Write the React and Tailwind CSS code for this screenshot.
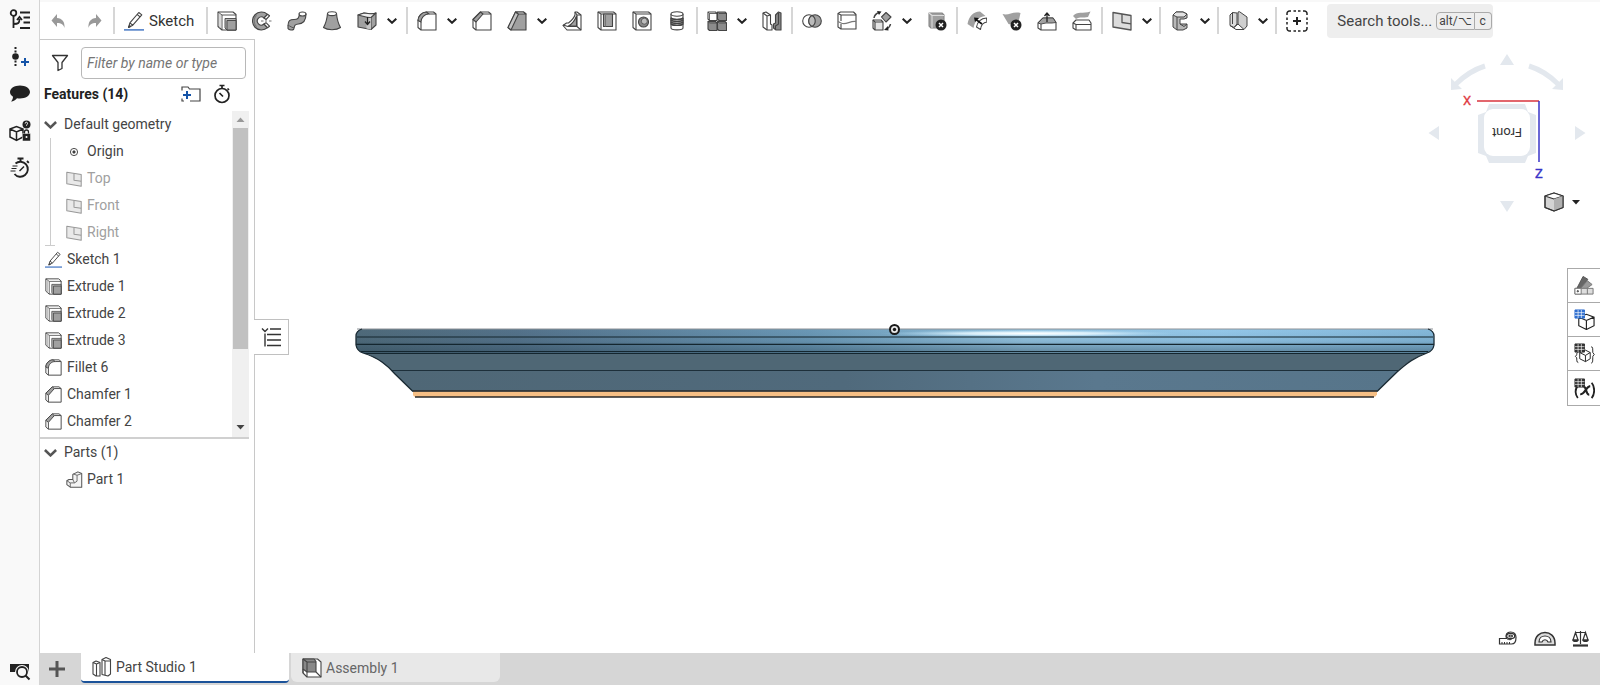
import React from "react";

const DARK = "#444";
const MID = "#a0a0a0";
const LIGHT = "#dcdcdc";

const Icon = ({ size = 20, children }) => (
  <svg
    width={size}
    height={size}
    viewBox="0 0 20 20"
    fill="none"
    stroke={DARK}
    strokeWidth="1.1"
    strokeLinejoin="round"
    className="block shrink-0"
    aria-hidden="true"
  >
    {children}
  </svg>
);

const SketchIcon = ({ size }) => (
  <Icon size={size}>
    <path d="M4.5 16.5l1.4-4.6L14.8 1.5l3 2.4-9 10.300zM5.900 11.900l2.900 2.300M13.200 3.500l2.900 2.400" fill="#fff" strokeWidth="1.100" />
    <path d="M4.500 16.500l1-2 1 .9z" fill={DARK} />
    <path d="M0 18.900h20" stroke="#3a6fc0" strokeWidth="1.400" />
  </Icon>
);

const ExtrudeIcon = ({ size }) => (
  <Icon size={size}>
    <path d="M1 1h15l3 2.500V19H5l-4-3.500z" fill="#fff" />
    <path d="M1 1l4 3h14M5 4v15" strokeWidth=".9" />
    <path d="M3 2.500v14.600" stroke="#aaa" strokeWidth=".9" />
    <path d="M8 7.500h11V19h-9l-2-2z" fill="#b4b4b4" strokeWidth=".9" />
    <path d="M10 9.500h9V19h-9z" fill={MID} strokeWidth=".9" />
  </Icon>
);

const FilletIcon = ({ size }) => (
  <Icon size={size}>
    <path d="M1 9.500C1 5 5 1 9.500 1h7l2.500 2v16H4l-3-2.500z" fill="#fff" />
    <path d="M1 9.500C1 5 5 1 9.500 1L12 3c-4.500 0-8 3.500-8 8z" fill={MID} />
    <path d="M12 3h7M4 11v8" />
  </Icon>
);

const ChamferIcon = ({ size }) => (
  <Icon size={size}>
    <path d="M1 8.500L8.500 1h8L19 3v16H4l-3-2.500z" fill="#fff" />
    <path d="M1 8.500L8.500 1 11 3l-7 8z" fill={MID} />
    <path d="M11 3h8M4 11v8" />
  </Icon>
);

const PlaneIcon = ({ size }) => (
  <Icon size={size}>
    <path d="M1 1.500l18 3V19L1 16z" fill={LIGHT} stroke="#555" strokeWidth="1.300" />
    <path d="M10 3v8.500l9 1.300" stroke="#555" strokeWidth="1.300" />
  </Icon>
);

const CubeX = ({ cx, cy }) => (
  <>
    <circle cx={cx} cy={cy} r="5.500" fill="#222" stroke="none" />
    <path d={`M${cx - 2} ${cy - 2}l4 4m0-4l-4 4`} stroke="#fff" strokeWidth="1.500" />
  </>
);

const tools = {
  extrude: <ExtrudeIcon />,
  revolve: (
    <Icon>
      <path d="M15.500 3.300A9 9 0 1 0 15.500 16.700L12 13a4 4 0 1 1 0-6z" fill={MID} />
      <path d="M15.500 3.300l2 1.500-3.500 3.700L12 7zM15.500 16.700l2-1.500-3.500-3.500L12 13z" fill="#fff" />
      <path d="M4.500 4c-3 3-3 9 0 12" stroke="#777" />
      <path d="M9 10h2.500M13 10h2M17 10h2.500" stroke="#777" />
    </Icon>
  ),
  sweep: (
    <Icon>
      <path d="M1 14.500c0-5 2-6 6-6s4.500-1 5.500-5L19 3c0 7-2.500 9.500-7.500 10-3.500.300-4 1.500-4.500 4.500z" fill={MID} />
      <ellipse cx="15.500" cy="3" rx="3.500" ry="2" fill="#fff" />
      <path d="M1 14.500v3c1 1.800 4.500 2 6 .500" fill={MID} />
    </Icon>
  ),
  loft: (
    <Icon>
      <path d="M5.500 2.500C5 9 3.500 13 1.500 16.500c4 3 13 3 17 0C16.500 13 15 9 14.500 2.500z" fill={MID} />
      <ellipse cx="10" cy="2.700" rx="4.500" ry="1.900" fill="#fff" />
    </Icon>
  ),
  thicken: (
    <Icon>
      <path d="M1 4l6-2c4 0 8 2 12 0v12l-5 4.500L1 16z" fill={MID} />
      <path d="M1 4l6-2c4 0 8 2 12 0l-5 4.500C10 7 5 4.500 1 4z" fill="#eee" />
      <path d="M14 6.500v12" />
      <path d="M9.500 7c3 .300 4 0 4.500-.500v12L9.500 17.500z" fill="#c6c6c6" stroke="none" />
      <path d="M10.500 6v7M8 10.500l2.500 3 2.500-3" stroke="#222" strokeWidth="1.300" />
    </Icon>
  ),
  fillet: <FilletIcon />,
  chamfer: <ChamferIcon />,
  draft: (
    <Icon>
      <path d="M8.500 1h8L19 3v16H4l-3-2.500z" fill={MID} />
      <path d="M8.500 1L1 16.500 4 19l7.500-16z" fill="#c4c4c4" />
      <path d="M8.500 1h8L19 3h-7.500z" fill="#ddd" />
    </Icon>
  ),
  rib: (
    <Icon>
      <path d="M13 1h2l4 3v15H5l-4-4.500L4.500 12h2C9 10 12 7 13 4z" fill="#fff" />
      <path d="M14.500 5v10h-8C10 13 13 9 14.500 5z" fill={MID} />
      <path d="M1 14l5 1.500h9V4l-2-3M15 15.500l4 3.500M15 4h4" />
    </Icon>
  ),
  shell: (
    <Icon>
      <path d="M1 1h15.500L19 3v16H4L1 16.500z" fill="#fff" />
      <path d="M1 1l3 2h15M4 3v16" />
      <path d="M6.500 3h9v12.500h-9z" fill={MID} />
      <path d="M8.500 3v12.500" stroke="#777" />
    </Icon>
  ),
  hole: (
    <Icon>
      <path d="M1 1h15.500L19 3v16H4L1 16.500z" fill="#fff" />
      <path d="M1 1l3 2h15M4 3v16" />
      <circle cx="11.500" cy="11" r="5" fill="#888" />
      <circle cx="12.300" cy="10.200" r="3" fill="#bdbdbd" strokeWidth=".7" />
    </Icon>
  ),
  thread: (
    <Icon>
      <path d="M4 3v14c0 2.500 12 2.500 12 0V3" fill="#fff" />
      <ellipse cx="10" cy="3" rx="6" ry="2.200" fill="#fff" />
      <path d="M4 7c2 1.800 10 1.800 12 0v6c-2 2-10 2-12 0z" fill={MID} />
      <path d="M4 7c2 2 10 2 12 0M4 9c2 2 10 2 12 0M4 11c2 2 10 2 12 0M4 13c2 2 10 2 12 0" />
    </Icon>
  ),
  pattern: (
    <Icon>
      <path d="M1 1h7.500L10 2.500V9.500H2.500L1 8z" fill="#fff" />
      <path d="M10.500 1H18l1.500 1.500v7H12l-1.500-1.500zM1 10.500h7.500L10 12v7.500H2.500L1 18zM10.500 10.500H18l1.500 1.500v7.500H12L10.500 18z" fill="#8c8c8c" />
      <path d="M1 1l1.500 1.500H10M2.500 2.500v7M10.500 1L12 2.500h7.500M1 10.500L2.500 12H10M10.500 10.500L12 12h7.500" strokeWidth=".8" />
    </Icon>
  ),
  mirror: (
    <Icon>
      <path d="M1 2l3-1 4.500 3v9l1.500 1v5H5L1 16z" fill="#fff" />
      <path d="M1 2l4 3v14M5 5l3.500-1" />
      <path d="M11.500 13l2-1V4l3-3L19 2v17h-5l-2.500-2z" fill="#888" />
      <path d="M16.500 2v11l-3 2v4" />
    </Icon>
  ),
  boolean: (
    <Icon>
      <circle cx="7" cy="10" r="6.300" fill="#fff" />
      <circle cx="13" cy="10" r="6.300" fill={MID} />
      <path d="M10 4.500a6.300 6.300 0 0 1 0 11 6.300 6.300 0 0 1 0-11z" fill="#bbb" />
    </Icon>
  ),
  split: (
    <Icon>
      <path d="M1 2.500L3.500 1h13L19 3.500V18H4L1 16z" fill="#fff" />
      <path d="M1 2.500l3 1.500h15M4 4v6M4 13v5" />
      <path d="M1 10.500l3 1.500c5 2.500 9-2.500 15-1.500" stroke="#777" />
    </Icon>
  ),
  transform: (
    <Icon>
      <path d="M1 9h8l2 2v8H3l-2-2z" fill="#e5e5e5" />
      <path d="M1 9l2 2h8M3 11v8" />
      <path d="M14 1.500l5 4.500-5 5-4.500-5z" fill={MID} />
      <path d="M2 7c.500-3 2-4.500 5-5.500M18.500 13c-.500 3-2 4-4 5" strokeWidth="1.500" />
      <path d="M5 0l4.500.500L7 4zM16 15l-4 4 4.500.500z" fill="#222" stroke="none" />
    </Icon>
  ),
  deletePart: (
    <Icon>
      <path d="M2 2h13l2 2v13H4l-2-2z" fill={MID} stroke="#888" />
      <path d="M2 2l3 2.500h12M5 4.500V17" stroke="#ddd" />
      <CubeX cx={14} cy={14} />
    </Icon>
  ),
  modifyFillet: (
    <Icon>
      <path d="M.5 13C2 5 6 1 13 .5L18.500 5C11 6 8 10 6.500 17z" fill={MID} stroke="none" />
      <path d="M9.500 16c1-5 4-8.500 10-9l.500 4c-4 .500-6 3-6.500 7.500z" fill="#fff" />
      <path d="M15 13L9 8.500" strokeWidth="1.600" stroke="#111" />
      <path d="M7 6.500l5 .500-4 4z" fill="#111" stroke="none" />
    </Icon>
  ),
  deleteFace: (
    <Icon>
      <path d="M.5 3c6 2 10-3 18-1l-2 9c-5-.500-6 3-10 2z" fill={MID} stroke="none" />
      <CubeX cx={14} cy={14} />
    </Icon>
  ),
  moveFace: (
    <Icon>
      <path d="M1 12l5-5h10l3 4.500V19H4l-3-2z" fill="#fff" />
      <path d="M1 12l5-5h10l3 4.500-4 .500H9l-5 1z" fill={MID} strokeWidth=".9" />
      <path d="M4 13v6" />
      <path d="M10 11V2.500M7.500 5L10 2l2.500 3" strokeWidth="1.300" stroke="#222" />
    </Icon>
  ),
  replaceFace: (
    <Icon>
      <path d="M1 5c4-5 10-2 17.500-4.500L16 6c-5 1-8-.500-12 2z" fill={MID} stroke="none" />
      <path d="M1 12l3-3h13l2 3v7H4l-3-2z" fill="#fff" />
      <path d="M1 12l3 1.500h15M4 13.500V19" />
    </Icon>
  ),
  plane: <PlaneIcon />,
  frame: (
    <Icon>
      <path d="M3 4l3-3h7l4 2v4l-3 1h-4v5h7v4l-4 2H7l-4-3z" fill="#b8b8b8" strokeWidth="1" />
      <path d="M3 4l3-3h7l4 2-3 3H7z" fill="#e2e2e2" strokeWidth="1" />
      <path d="M7 6v13M10 13l4 2.500 3-2.500" strokeWidth="1" />
    </Icon>
  ),
  sheetMetal: (
    <Icon>
      <path d="M2 4l2.500-2.500L9 2v11l-3 3.500-4-2z" fill={LIGHT} strokeWidth="1" />
      <path d="M10 1l1.500-.300L19 6v9l-3 3.500L10 13z" fill="#cfcfcf" strokeWidth="1" />
      <path d="M2 14.500L8 18.500h8M6 16.500L10 13M4.500 1.500V13" strokeWidth="1" />
    </Icon>
  ),
  custom: (
    <svg width="22" height="22" viewBox="0 0 22 22" fill="none" stroke="#222" strokeWidth="1.500" className="block" aria-hidden="true">
      <path d="M1 5V3.500A2.500 2.500 0 0 1 3.500 1H5M7.500 1h2.500M12 1h2.500M17 1h1.500A2.500 2.500 0 0 1 21 3.500V5M21 7.500V10M21 12v2.500M21 17v1.500a2.500 2.500 0 0 1-2.500 2.500H17M14.500 21H12M10 21H7.500M5 21H3.500A2.500 2.500 0 0 1 1 18.500V17M1 14.500V12M1 10V7.500" />
      <path d="M11 7v8M7 11h8" strokeWidth="2" />
    </svg>
  ),
};

// each group is one block between separators; "menu" adds the drop-down arrow
const toolGroups = [
  [
    { id: "extrude", label: "Extrude" },
    { id: "revolve", label: "Revolve" },
    { id: "sweep", label: "Sweep" },
    { id: "loft", label: "Loft" },
    { id: "thicken", label: "Thicken", menu: true },
  ],
  [
    { id: "fillet", label: "Fillet", menu: true },
    { id: "chamfer", label: "Chamfer" },
    { id: "draft", label: "Draft", menu: true },
    { id: "rib", label: "Rib" },
    { id: "shell", label: "Shell" },
    { id: "hole", label: "Hole" },
    { id: "thread", label: "External thread" },
  ],
  [
    { id: "pattern", label: "Linear pattern", menu: true },
    { id: "mirror", label: "Mirror" },
  ],
  [
    { id: "boolean", label: "Boolean" },
    { id: "split", label: "Split" },
    { id: "transform", label: "Transform", menu: true },
    { id: "deletePart", label: "Delete part" },
  ],
  [
    { id: "modifyFillet", label: "Modify fillet" },
    { id: "deleteFace", label: "Delete face" },
    { id: "moveFace", label: "Move face" },
    { id: "replaceFace", label: "Replace face" },
  ],
  [{ id: "plane", label: "Plane", menu: true }],
  [{ id: "frame", label: "Frame", menu: true }],
  [{ id: "sheetMetal", label: "Sheet metal", menu: true }],
  [{ id: "custom", label: "Add custom features" }],
];

const Chevron = ({ width = 10, height = 6, className = "" }) => (
  <svg width={width} height={height} viewBox="0 0 10 6" fill="none" stroke="currentColor" strokeWidth="2" className={className} aria-hidden="true">
    <path d="M.7.7L5 4.800 9.300.7" />
  </svg>
);

function Toolbar() {
  return (
    <header className="flex h-[39px] shrink-0 items-center border-t-2 border-[#f8f8f8] bg-white">
      <button aria-label="Undo" className="ml-2 flex w-5 justify-center">
        <svg width="15" height="16" viewBox="0 0 15 16" fill="#999" aria-hidden="true">
          <path d="M6 1v4c5 .500 8 3.500 7.500 10-1-3.500-3-5-7.500-5v4L.5 7.500z" />
        </svg>
      </button>
      <button aria-label="Redo" className="ml-4 flex w-5 justify-center">
        <svg width="15" height="16" viewBox="0 0 15 16" fill="#999" aria-hidden="true">
          <path d="M9 1v4c-5 .500-8 3.500-7.500 10 1-3.500 3-5 7.500-5v4l5.500-6.500z" />
        </svg>
      </button>
      <div className="ml-[9px] flex h-[27px] items-center border-l-2 border-[#d6d6d6] pl-[9px] pr-3">
        <button className="flex items-center gap-[5px] text-[15px] leading-5 text-[#333]">
          <SketchIcon />
          Sketch
        </button>
      </div>
      {toolGroups.map((group, i) => (
        <div
          key={i}
          className={`flex h-[27px] items-center gap-[15px] border-l-2 border-[#d6d6d6] pl-[9px] ${
            group.length === 1 ? "pr-[7px]" : "pr-[9px]"
          }`}
        >
          {group.map((tool) => (
            <div key={tool.id} className="flex items-center gap-[10px]">
              <button aria-label={tool.label}>{tools[tool.id]}</button>
              {tool.menu && (
                <button aria-label={`${tool.label} options`} className="text-[#222]">
                  <Chevron />
                </button>
              )}
            </div>
          ))}
        </div>
      ))}
      <button className="ml-3 flex h-[34px] w-[166px] shrink-0 items-center whitespace-nowrap rounded-sm bg-[#eeeeee] pl-[10px] text-[#444]">
        <span className="text-[15px] leading-5">Search tools...</span>
        <kbd className="ml-1 rounded-l-sm border border-[#aaa] px-[2px] font-[inherit] text-xs leading-4">alt/⌥</kbd>
        <kbd className="rounded-r-sm border border-l-0 border-[#aaa] px-[5px] font-[inherit] text-xs leading-4">c</kbd>
      </button>
    </header>
  );
}

const railItems = [
  {
    label: "Feature list",
    icon: (
      <>
        <circle cx="4.500" cy="4" r="2.800" strokeWidth="1.800" />
        <path d="M4.500 7v12M4.500 15c5 0 6-1 6-5M8 11l2.500-3 2.500 3" strokeWidth="1.800" />
        <path d="M11 3.500h10M14.500 8.500H21M14.500 13.500H21M11 19h10" strokeWidth="2" />
      </>
    ),
  },
  {
    label: "Insert",
    icon: (
      <>
        <circle cx="6.500" cy="10.500" r="3.300" fill="#222" stroke="none" />
        <path d="M6.500 1v6M6.500 14.500v6" strokeWidth="2" strokeDasharray="2 1.500" />
        <path d="M16 12v8M12 16h8" stroke="#1554a8" strokeWidth="2" />
      </>
    ),
  },
  {
    label: "Comments",
    icon: <path d="M11 2.500c5.500 0 10 2.800 10 6.500s-4.500 6.500-10 6.500c-1 0-2-.100-3-.300-1.500 1.800-3.500 3-6 3.300 1.300-1.200 2-3 2-4.800C2.300 12.600 1 11 1 9c0-3.700 4.500-6.500 10-6.500z" fill="#222" stroke="none" />,
  },
  {
    label: "Configurations",
    icon: (
      <>
        <path d="M1 9l6.500-2.500L14 9v8l-6.500 3.500L1 17zM1 9l6.500 3L14 9M7.500 12v8.500" strokeWidth="1.500" />
        <circle cx="17.500" cy="4.500" r="4" fill="#222" stroke="none" />
        <path d="M16.200 3.500c0-2 2.800-1.500 2.300.2-.300.900-1 .8-1 2" stroke="#fff" strokeWidth="1" />
        <path d="M13.500 13.500h8V21h-8z" fill="#222" stroke="#f9f9f9" strokeWidth=".5" />
        <path d="M15.500 13.500v-1.500a2 2 0 0 1 4 0v1.500" strokeWidth="1.300" />
        <circle cx="17.500" cy="17" r="1" fill="#fff" stroke="none" />
      </>
    ),
  },
  {
    label: "Performance",
    icon: (
      <>
        <path d="M6.500 6.500a7.500 7.500 0 1 1-1 10.500" strokeWidth="1.900" />
        <path d="M8.500 1.500h6M11.500 1.500v3M18 4l1.800 1.800" strokeWidth="1.900" />
        <path d="M3.500 9h5M2.500 11.500h5M1.500 14h5" strokeWidth="1.200" />
        <path d="M10.500 14l4.500-4.500" strokeWidth="1.500" />
      </>
    ),
  },
];

const RailIcon = ({ children }) => (
  <svg width="22" height="22" viewBox="0 0 22 22" fill="none" stroke="#222" aria-hidden="true">
    {children}
  </svg>
);

function Rail() {
  return (
    <nav className="flex w-10 shrink-0 flex-col border-r border-[#d4d4d4] bg-[#f9f9f9] pt-px">
      {railItems.map((item) => (
        <button key={item.label} aria-label={item.label} className="flex h-[37px] items-center justify-center">
          <RailIcon>{item.icon}</RailIcon>
        </button>
      ))}
      <button aria-label="Tab manager" className="mt-auto flex h-7 items-center justify-center">
        <RailIcon>
          <path d="M1 4h19v8H1z" fill="#222" stroke="none" />
          <circle cx="13" cy="12" r="5" fill="#f9f9f9" stroke="#f9f9f9" strokeWidth="4" />
          <circle cx="13" cy="12" r="5" fill="#f9f9f9" strokeWidth="1.800" />
          <path d="M16.500 15.500l4 4" strokeWidth="2" />
        </RailIcon>
      </button>
    </nav>
  );
}

const planes = ["Top", "Front", "Right"];

const features = [
  { name: "Sketch 1", icon: SketchIcon },
  { name: "Extrude 1", icon: ExtrudeIcon },
  { name: "Extrude 2", icon: ExtrudeIcon },
  { name: "Extrude 3", icon: ExtrudeIcon },
  { name: "Fillet 6", icon: FilletIcon },
  { name: "Chamfer 1", icon: ChamferIcon },
  { name: "Chamfer 2", icon: ChamferIcon },
];

function FeaturePanel() {
  return (
    <aside className="relative z-10 flex w-[215px] shrink-0 flex-col border-r border-t border-[#c8c8c8] bg-white text-sm text-[#444]">
      <div className="flex items-center gap-3 pl-[11px] pr-2 pt-[7px]">
        <button aria-label="Filter" className="shrink-0">
          <svg width="18" height="18" viewBox="0 0 18 18" fill="none" stroke="#333" strokeWidth="1.300" strokeLinejoin="round" aria-hidden="true">
            <path d="M1.500 1.500h15l-5.500 7v6l-4 2v-8z" />
          </svg>
        </button>
        <input
          type="text"
          aria-label="Filter by name or type"
          placeholder="Filter by name or type"
          className="h-8 w-full min-w-0 rounded-sm border border-[#b8b8b8] px-[5px] text-sm italic placeholder:text-[#757575]"
        />
      </div>

      <div className="flex h-8 items-center pb-[2px] pl-1 pr-[23px]">
        <h2 className="mr-auto text-sm font-bold text-[#222]">Features (14)</h2>
        <button aria-label="Add folder" className="mr-3">
          <svg width="20" height="18" viewBox="0 0 20 18" fill="none" stroke="#444" strokeWidth="1.200" aria-hidden="true">
            <path d="M1 5.500V2h6l1.500 2H19v12H9M1 13.500V16h2" />
            <path d="M6 6v8M2 10h8" stroke="#1554a8" strokeWidth="2" />
          </svg>
        </button>
        <button aria-label="Regeneration times">
          <svg width="18" height="20" viewBox="0 0 18 20" fill="none" stroke="#222" strokeWidth="1.700" aria-hidden="true">
            <circle cx="9" cy="11.500" r="7" />
            <path d="M6.500 1.500h5M9 1.500v3M14.500 4.500l1.500 1.500M6.500 9l3.500 3.500" />
          </svg>
        </button>
      </div>

      <div className="mr-[5px] flex h-[328px] border-b-2 border-[#d0d0d0]">
        <ul className="flex-1 leading-[27px]">
          <li>
            <button className="flex items-center gap-[7px] pl-1">
              <Chevron width={13} height={8} className="text-[#555]" />
              Default geometry
            </button>
            <ul className="ml-[10px] border-l border-[#ccc] pl-[15px]">
              <li className="flex h-[27px] items-center gap-[5px]">
                <Icon size={16}>
                  <circle cx="10" cy="10" r="4.500" strokeWidth="1.200" />
                  <circle cx="10" cy="10" r="1.500" fill="#333" />
                </Icon>
                Origin
              </li>
              {planes.map((name) => (
                <li key={name} className="flex h-[27px] items-center gap-[5px] text-[#a0a0a0]">
                  <span className="opacity-60">
                    <PlaneIcon size={16} />
                  </span>
                  {name}
                </li>
              ))}
            </ul>
            <div className="-mt-px ml-[5px] w-[10px] border-t border-[#ccc]" />
          </li>
          {features.map(({ name, icon: FeatureIcon }) => (
            <li key={name} className="flex h-[27px] items-center gap-[5px] pl-[5px]">
              <FeatureIcon size={17} />
              {name}
            </li>
          ))}
        </ul>
        <div className="flex w-[17px] flex-col items-center bg-[#f0f0f0]" aria-hidden="true">
          <svg width="17" height="17" viewBox="0 0 17 17" className="shrink-0">
            <path d="M4.500 11h8l-4-4.500z" fill="#999" />
          </svg>
          <div className="h-[221px] w-[15px] bg-[#c1c1c1]" />
          <svg width="17" height="17" viewBox="0 0 17 17" className="mt-auto shrink-0">
            <path d="M4.500 5h8l-4 4.500z" fill="#444" />
          </svg>
        </div>
      </div>

      <ul className="leading-[27px]">
        <li>
          <button className="flex items-center gap-[7px] pl-1">
            <Chevron width={13} height={8} className="text-[#555]" />
            Parts (1)
          </button>
          <ul className="pl-[26px]">
            <li className="flex items-center gap-1">
              <Icon size={17}>
                <path d="M1 11.500L3.500 10H8V4l6-3 4.500 2v16H5l-4-3z" fill="#f4f4f4" stroke="#555" strokeWidth="1.200" />
                <path d="M1 11.500L5 14h5l3-2V5l5.500-2M13 5L8.500 3.500M5 14v5M8 10l2 4" stroke="#666" />
              </Icon>
              Part 1
            </li>
          </ul>
        </li>
      </ul>

      <button
        aria-label="Collapse feature list"
        className="absolute left-full top-[279px] flex h-9 w-[35px] items-center justify-center border border-l-0 border-[#c0c0c0] bg-white"
      >
        <svg width="20" height="20" viewBox="0 0 20 20" fill="none" stroke="#333" strokeWidth="1.400" aria-hidden="true">
          <path d="M1 1.500l3 3 3-3M4 6.500V19.500M9 2h11M6 7.500h14M6 13h14M6 18.500h14" />
        </svg>
      </button>
    </aside>
  );
}

// front view of the moulding
function Model() {
  return (
    <svg viewBox="255 39 1345 614" className="absolute inset-0 h-full w-full" role="img" aria-label="Part 1, front view">
      <defs>
        <linearGradient id="band" x1="0" x2="1" y1="0" y2="0">
          <stop offset="0" stopColor="#4f6a7a" />
          <stop offset=".15" stopColor="#54728a" />
          <stop offset=".42" stopColor="#6a98b6" />
          <stop offset=".62" stopColor="#93c3e0" />
          <stop offset=".8" stopColor="#94c8ea" />
          <stop offset="1" stopColor="#84b8da" />
        </linearGradient>
        <linearGradient id="shade" x1="0" x2="0" y1="0" y2="1">
          <stop offset="0" stopColor="#2c4656" stopOpacity="0" />
          <stop offset=".5" stopColor="#2c4656" stopOpacity=".1" />
          <stop offset="1" stopColor="#2c4656" stopOpacity=".5" />
        </linearGradient>
        <linearGradient id="lower" x1="0" x2="1" y1="0" y2="0">
          <stop offset="0" stopColor="#4f6776" />
          <stop offset=".45" stopColor="#506a7c" />
          <stop offset=".7" stopColor="#5a788e" />
          <stop offset="1" stopColor="#57758a" />
        </linearGradient>
        <radialGradient id="shine">
          <stop offset="0" stopColor="#fff" />
          <stop offset=".45" stopColor="#e4f6ff" stopOpacity=".85" />
          <stop offset="1" stopColor="#a8d8f4" stopOpacity="0" />
        </radialGradient>
      </defs>
      <path d="M361 352c18 6 25 13 34 22l18 17.500h964l20-20c11-11 18-13 31-19.500z" fill="#4f6775" />
      <path d="M392 370.500l21 21h964l21-21z" fill="url(#lower)" />
      <path d="M362 329h1066q6 1 6 7v9q-1 6-7 8H363q-6-2-7-8v-9q0-6 6-7z" fill="url(#band)" />
      <path d="M362 329h1066q6 1 6 7v9q-1 6-7 8H363q-6-2-7-8v-9q0-6 6-7z" fill="url(#shade)" />
      <ellipse cx="1030" cy="333.500" rx="150" ry="3.500" fill="url(#shine)" />
      <path d="M357 329h1076" stroke="#8c9196" />
      <path d="M357 337h1076M356 344.300h1078M361 351.500h1067M364 353.500h1062" stroke="#14262f" strokeWidth="1.200" />
      <path d="M391 370.500h1007" stroke="#1d2f3a" strokeWidth="1.200" />
      <path d="M413 391.500h964v3q-1 2.500-4 2.500H417q-4 0-4-2.500z" fill="#f6bf85" />
      <path d="M413 391h964M415 397h959" stroke="#2a2a2a" strokeWidth="1.300" />
      <path
        d="M362 329q-6 2-6 7v9q1 6 7 8c16 5 24 12 32 21l18 17.500M1428 329q6 2 6 7v9q-1 6-7 8c-13 5-19 9-30 19l-20 19.500"
        fill="none"
        stroke="#1a2a33"
        strokeWidth="1.300"
      />
      <circle cx="894.500" cy="329.500" r="4.500" fill="#e8e8e8" stroke="#1a1a1a" strokeWidth="2" />
      <circle cx="894.500" cy="329.500" r="1.700" fill="#1a1a1a" />
    </svg>
  );
}

function ViewCube() {
  return (
    <div className="absolute right-2 top-3 flex flex-col items-end">
      <svg width="170" height="164" viewBox="0 0 170 164" fill="#e3e8ee" role="img" aria-label="View cube">
        <path d="M78 14h14L85 3zM78 150h14l-7 11zM17 75v14L6.500 82zM153 75v14l10.500-7z" />
        <path d="M63 15Q47 20 34 33M107 15q16 5 29 18" fill="none" stroke="#e3e8ee" strokeWidth="5" />
        <path d="M29 27v12l11-1zM141 27v12l-11-1z" />
        <path d="M67 53h36l3 8 8 3v38l-8 3-3 7H67l-3-7-8-3V64l8-3z" />
        <rect x="62" y="58" width="46" height="47" rx="9" fill="#fff" />
        <path d="M55 50h62" stroke="#d9333c" strokeWidth="1.500" />
        <path d="M117 50v61" stroke="#3834c8" strokeWidth="1.500" />
        <text x="45" y="54" textAnchor="middle" fontSize="13" fill="#e0393f" stroke="#e0393f" strokeWidth=".3">X</text>
        <text x="117" y="127" textAnchor="middle" fontSize="13" fill="#3834c8" stroke="#3834c8" strokeWidth=".3">Z</text>
        <text x="85" y="85" textAnchor="middle" fontSize="13" fill="#333" transform="rotate(180 85 81)">Front</text>
      </svg>
      <button aria-label="View options" className="-mt-[23px] mr-3 flex items-center gap-2">
        <svg width="20" height="20" viewBox="0 0 20 20" stroke="#333" strokeWidth="1.100" strokeLinejoin="round" aria-hidden="true">
          <path d="M1 4L10 1l9 3v11.500L10 19l-9-3.500z" fill="#d4d4d4" />
          <path d="M1 4l9-3 9 3-9 3z" fill="#fff" />
          <path d="M10 7v12l9-3.500V4z" fill="#b0b0b0" stroke="none" />
          <path d="M19 4v11.500L10 19l-9-3.500V4" fill="none" />
        </svg>
        <svg width="8" height="5" viewBox="0 0 8 5" fill="#222" aria-hidden="true">
          <path d="M0 0h8L4 4.500z" />
        </svg>
      </button>
    </div>
  );
}

const Grid = ({ color }) => (
  <>
    <path d="M1 1h10v8.500H1z" fill={color} stroke={color} />
    <path d="M4.300 1v8.500M7.700 1v8.500M1 3.800h10M1 6.700h10" stroke="#fff" strokeWidth=".7" />
  </>
);

const sideTools = [
  {
    label: "Appearance",
    icon: (
      <>
        <path d="M3 14L9.500 1.500l5 3L7 15z" fill="#666" stroke="#555" />
        <path d="M6 15l8-9 5 4-7 5z" fill="#999" stroke="#777" />
        <path d="M1 14h19v6H1z" fill="#ddd" stroke="#777" />
        <path d="M1 14h6.500v6H1z" fill="#fff" stroke="#777" />
        <path d="M14 14v6" stroke="#777" />
        <circle cx="4" cy="17" r=".7" />
      </>
    ),
  },
  {
    label: "Configuration table",
    icon: (
      <>
        <path d="M5 8.500l8-3 8 3v9l-8 4-8-4zM5 8.500l8 3.500 8-3.500M13 12v9.500" fill="#fff" strokeWidth="1.200" />
        <Grid color="#2f6fd0" />
      </>
    ),
  },
  {
    label: "Custom table",
    icon: (
      <>
        <path d="M6 10l6-2.500 5 2.500v6.500l-5 3-6-3zM6 10l6 3 5-3M12 13v6.500" fill="#fff" />
        <path d="M4 10c-1.500 0-1 2-1.200 2.500L1.500 14l1.300 1.500C3 17 2.500 20.500 4.500 20.500M18 4c2 0 1.500 2 1.700 6l1.500 2-1.500 2c-.2 4 .3 7-1.700 7" />
        <Grid color="#333" />
      </>
    ),
  },
  {
    label: "Variable table",
    icon: (
      <>
        <path d="M3.500 9C1 12 1 17 4 21M18.500 5c3.500 4 3.500 12 0 16" strokeWidth="1.900" />
        <path d="M10 9c3.500 0 2 8.500 6 8.500M17 8.500c-4.500.500-6 9-10.500 8.500" strokeWidth="2.200" />
        <Grid color="#333" />
      </>
    ),
  },
];

function Canvas() {
  return (
    <main className="relative min-w-0 flex-1 bg-white">
      <Model />
      <ViewCube />
      <div className="absolute right-0 top-[229px] flex w-[33px] flex-col divide-y divide-[#aaa] border border-r-0 border-[#aaa] bg-white">
        {sideTools.map((tool) => (
          <button key={tool.label} aria-label={tool.label} className="flex h-[34px] items-center justify-center">
            <svg width="21" height="21" viewBox="0 0 22 22" fill="none" stroke="#222" aria-hidden="true">
              {tool.icon}
            </svg>
          </button>
        ))}
      </div>
      <div className="absolute bottom-1 right-[11px] flex items-center gap-4">
        <button aria-label="Measure">
          <svg width="20" height="20" viewBox="0 0 20 20" fill="none" stroke="#333" strokeWidth="1.200" aria-hidden="true">
            <path d="M1.500 9.500h7C7 6 9 3 12.500 3c4 0 5.500 2.500 5.500 5.500 0 4-1.500 6.500-4.500 6.500h-12z" fill="#fff" />
            <ellipse cx="12.700" cy="7" rx="4" ry="2.700" />
            <ellipse cx="12.700" cy="7" rx="1.800" ry="1" />
            <path d="M4 15v-2M6.500 15v-2M9 15v-2M11.500 15v-2M8.500 9.500c1 1 3 1.500 5 1" strokeWidth="1" />
          </svg>
        </button>
        <button aria-label="Protractor">
          <svg width="22" height="20" viewBox="0 0 22 20" fill="none" stroke="#333" strokeWidth="1.500" aria-hidden="true">
            <path d="M1 16v-2C1 0 21 0 21 14v2z" fill="#ddd" />
            <path d="M5 13c0-8 12-8 12 0h-3c-1-3-5-3-6 0z" fill="#fff" strokeWidth="1.200" />
          </svg>
        </button>
        <button aria-label="Mass properties">
          <svg width="17" height="20" viewBox="0 0 17 20" fill="none" stroke="#333" strokeWidth="1.200" aria-hidden="true">
            <path d="M8.500 2v13M3 3.500h11M3.500 3.500L1 11h5zM13.500 3.500L11 11h5z" />
            <path d="M1 11c0 2 5 2 5 0zM11 11c0 2 5 2 5 0z" fill="#333" />
            <path d="M1 16.500h15" strokeWidth="2.200" />
          </svg>
        </button>
      </div>
    </main>
  );
}

function TabBar() {
  return (
    <footer className="flex h-8 shrink-0 items-start bg-[#d6d6d6] text-sm">
      <button aria-label="Add tab" className="flex h-8 w-[41px] items-center justify-center pr-[7px]">
        <svg width="16" height="16" viewBox="0 0 16 16" stroke="#555" strokeWidth="3" aria-hidden="true">
          <path d="M8 0v16M0 8h16" />
        </svg>
      </button>
      <button className="flex h-[30px] w-52 items-center gap-1 rounded-b border-b-2 border-[#1b5299] bg-white pl-[11px] text-[#444]">
        <Icon>
          <path d="M1 5.500L4 4l4 1.500V19H4L1 17z" fill="#fff" />
          <path d="M1 5.500l3.500 1.500L8 5.500M4.500 7v12" />
          <path d="M10 2.500L14 .5l4.500 2V17L16 19l-6-1.500z" fill="#fff" />
          <path d="M10 2.500l3 1.500h5.500M13 4v14" />
        </Icon>
        Part Studio 1
      </button>
      <button className="ml-0.5 flex h-[29px] w-[209px] items-center gap-1 rounded-b-md bg-[#e8e8e8] pl-[11px] text-[#666]">
        <Icon>
          <path d="M1 1h14.500L19 4v15H5l-4-4z" fill="#fff" />
          <path d="M1 1h11l2 2.500V14H5l-4-3z" fill="#888" />
          <path d="M1 1l4 3h9M5 4v10M1 11v4M5 14v5M14 14l5 5" />
        </Icon>
        Assembly 1
      </button>
    </footer>
  );
}

export default function App() {
  return (
    <div className="flex h-screen w-full overflow-hidden bg-white font-['Roboto',sans-serif]">
      <Rail />
      <div className="flex min-w-0 flex-1 flex-col">
        <Toolbar />
        <div className="flex min-h-0 flex-1">
          <FeaturePanel />
          <Canvas />
        </div>
        <TabBar />
      </div>
    </div>
  );
}
